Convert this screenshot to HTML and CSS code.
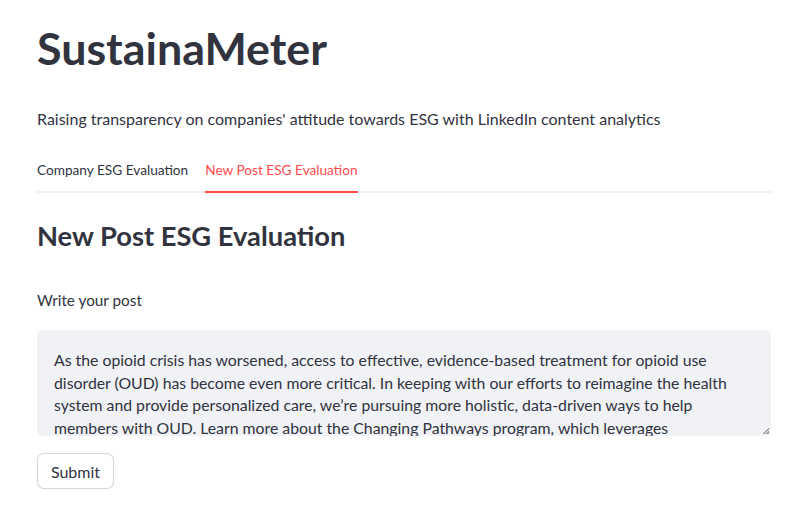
FILE: index.html
```html
<!DOCTYPE html>
<html lang="en">
<head>
<meta charset="utf-8">
<title>SustainaMeter</title>
<link rel="stylesheet" href="styles.css">
</head>
<body>
<main class="app">
  <h1 class="title">SustainaMeter</h1>
  <p class="subtitle">Raising transparency on companies' attitude towards ESG with LinkedIn content analytics</p>
  <nav class="tabs">
    <span class="tab">Company ESG Evaluation</span>
    <span class="tab tab-active">New Post ESG Evaluation</span>
  </nav>
  <h2 class="heading">New Post ESG Evaluation</h2>
  <label class="field-label">Write your post</label>
  <div class="textarea">
    <div class="textarea-text">As the opioid crisis has worsened, access to effective, evidence-based treatment for opioid use<br>disorder (OUD) has become even more critical. In keeping with our efforts to reimagine the health<br>system and provide personalized care, we’re pursuing more holistic, data-driven ways to help<br>members with OUD. Learn more about the Changing Pathways program, which leverages</div>
    <span class="resize-handle"></span>
  </div>
  <button class="btn" type="button">Submit</button>
</main>
</body>
</html>
```
FILE: styles.css
```css
* { box-sizing: border-box; }
html, body { margin: 0; padding: 0; background: #ffffff; }
body {
  font-family: Lato, "Open Sans", "Liberation Sans", sans-serif;
  color: #31333f;
}
.app {
  width: 734px;
  margin-left: 37px;
  display: flex;
  flex-direction: column;
  align-items: flex-start;
}
.title {
  margin: 22px 0 0;
  font-size: 44.8px;
  line-height: 52px;
  font-weight: 700;
  color: #31333f;
}
.subtitle {
  margin: 33px 0 0;
  font-size: 16px;
  line-height: 24px;
}
.tabs {
  margin-top: 29px;
  width: 100%;
  display: flex;
  gap: 17px;
  border-bottom: 2px solid #efeff1;
}
.tab {
  font-size: 13.65px;
  line-height: 20px;
  padding-bottom: 11px;
  margin-bottom: -2px;
  border-bottom: 2px solid transparent;
}
.tab-active {
  color: #ff4b4b;
  border-bottom-color: #ff4b4b;
}
.heading {
  margin: 26px 0 0;
  font-size: 27.3px;
  line-height: 34px;
  font-weight: 700;
}
.field-label {
  margin-top: 37px;
  font-size: 15.3px;
  line-height: 20px;
}
.textarea {
  position: relative;
  margin-top: 20px;
  width: 100%;
  height: 106px;
  background: #f0f2f6;
  border-radius: 6px;
  overflow: hidden;
  padding: 19px 16px 0 17px;
}
.textarea-text {
  font-size: 15.8px;
  line-height: 22.7px;
  white-space: nowrap;
}
.resize-handle {
  position: absolute;
  right: 2px;
  bottom: 2px;
  width: 6px;
  height: 6px;
  background: linear-gradient(135deg, transparent 45%, #9a9aa0 45%, #9a9aa0 60%, transparent 60%, transparent 75%, #9a9aa0 75%);
}
.btn {
  margin-top: 17px;
  width: 77px;
  height: 36px;
  font-family: inherit;
  font-size: 16px;
  color: #31333f;
  background: #ffffff;
  border: 1px solid rgba(49, 51, 63, 0.2);
  border-radius: 7px;
  padding: 0;
}
```
